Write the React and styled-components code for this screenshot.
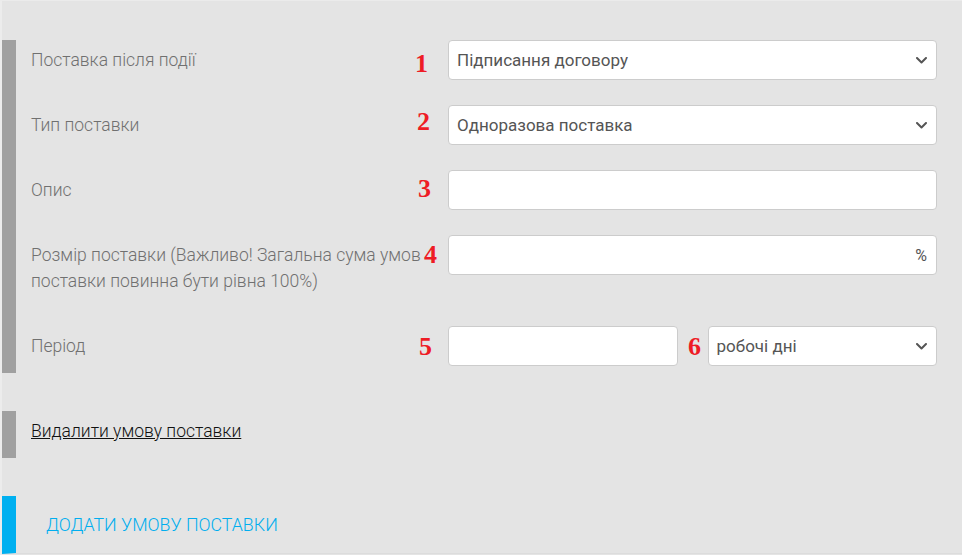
import React from 'react';
import styled, { createGlobalStyle } from 'styled-components';

const GlobalStyle = createGlobalStyle`
  html, body {
    margin: 0;
    padding: 0;
    background: #e4e4e4;
  }
  body {
    font-family: Roboto, "Liberation Sans", Arial, sans-serif;
  }
`;

const rows = [
  { label: 'Поставка після події', kind: 'select', value: 'Підписання договору', mark: { n: '1', left: 384, top: 11 } },
  { label: 'Тип поставки', kind: 'select', value: 'Одноразова поставка', mark: { n: '2', left: 386, top: 4 } },
  { label: 'Опис', kind: 'input', mark: { n: '3', left: 387, top: 6 } },
  {
    label: 'Розмір поставки (Важливо! Загальна сума умов поставки повинна бути рівна 100%)',
    kind: 'percent',
    mark: { n: '4', left: 393, top: 7 },
  },
];

const Chevron = () => (
  <svg width="11" height="7" viewBox="0 0 11 7" fill="none">
    <path d="M1 1l4.5 4.5L10 1" stroke="#555" strokeWidth="2" strokeLinecap="round" strokeLinejoin="round" />
  </svg>
);

function SelectField({ value }) {
  return (
    <SelectBox>
      <span>{value}</span>
      <Chevron />
    </SelectBox>
  );
}

function Field({ row }) {
  if (row.kind === 'select') return <SelectField value={row.value} />;
  if (row.kind === 'percent') {
    return (
      <SelectBox>
        <span />
        <Suffix>%</Suffix>
      </SelectBox>
    );
  }
  return <TextBox />;
}

export default function App() {
  return (
    <>
      <GlobalStyle />
      <Page>
        <Condition>
          {rows.map((row) => (
            <Row key={row.label}>
              <Label>{row.label}</Label>
              <Field row={row} />
              <Marker $left={row.mark.left} $top={row.mark.top}>{row.mark.n}</Marker>
            </Row>
          ))}
          <Row>
            <Label>Період</Label>
            <Pair>
              <TextBox />
              <SelectField value="робочі дні" />
            </Pair>
            <Marker $left={388} $top={8}>5</Marker>
            <Marker $left={657} $top={8}>6</Marker>
          </Row>
        </Condition>

        <DeleteBlock>
          <DeleteLink href="#">Видалити умову поставки</DeleteLink>
        </DeleteBlock>

        <AddBlock>
          <AddLink>Додати умову поставки</AddLink>
        </AddBlock>
      </Page>
    </>
  );
}

const Page = styled.div`
  width: 962px;
  height: 555px;
  box-sizing: border-box;
  border-top: 1px solid #ebebeb;
  border-left: 2px solid #ececec;
  padding-top: 39px;
  overflow: hidden;
`;

const Condition = styled.section`
  border-left: 14px solid #a0a0a0;
  padding: 0 25px 7px 15px;
`;

const Row = styled.div`
  position: relative;
  display: grid;
  grid-template-columns: 417px 1fr;
  align-items: start;
  margin-bottom: 25px;

  &:last-child {
    margin-bottom: 0;
  }
`;

const Label = styled.div`
  padding: 7px 0 7px 0;
  font-size: 17.5px;
  font-weight: 300;
  line-height: 26px;
  color: #707070;
`;

const Marker = styled.span`
  position: absolute;
  left: ${(p) => p.$left}px;
  top: ${(p) => p.$top}px;
  font-family: "Liberation Serif", "Times New Roman", serif;
  font-weight: bold;
  font-size: 26px;
  line-height: 26px;
  color: #ee1c25;
`;

const boxBase = `
  box-sizing: border-box;
  height: 40px;
  background: #fff;
  border: 1px solid #cccccc;
  border-radius: 4px;
`;

const TextBox = styled.div`
  ${boxBase}
`;

const SelectBox = styled.div`
  ${boxBase}
  display: flex;
  align-items: center;
  justify-content: space-between;
  padding: 0 9px 0 8px;
  font-size: 17px;
  color: #555;
`;

const Suffix = styled.span`
  color: #555;
  font-size: 16px;
`;

const Pair = styled.div`
  display: grid;
  grid-template-columns: 1fr 1fr;
  gap: 30px;
`;

const DeleteBlock = styled.div`
  margin-top: 38px;
  height: 47px;
  box-sizing: border-box;
  border-left: 14px solid #a0a0a0;
  padding: 0 0 7px 15px;
  display: flex;
  align-items: center;
`;

const DeleteLink = styled.a`
  font-size: 17.5px;
  font-weight: 300;
  color: #111;
  text-decoration: underline;
`;

const AddBlock = styled.div`
  margin-top: 38px;
  height: 58px;
  box-sizing: border-box;
  border-left: 14px solid #00b0f0;
  border-bottom: 1px solid #dcdcdc;
  padding-left: 30px;
  display: flex;
  align-items: center;
`;

const AddLink = styled.span`
  font-size: 17.8px;
  font-weight: 300;
  text-transform: uppercase;
  color: #00aeef;
`;
